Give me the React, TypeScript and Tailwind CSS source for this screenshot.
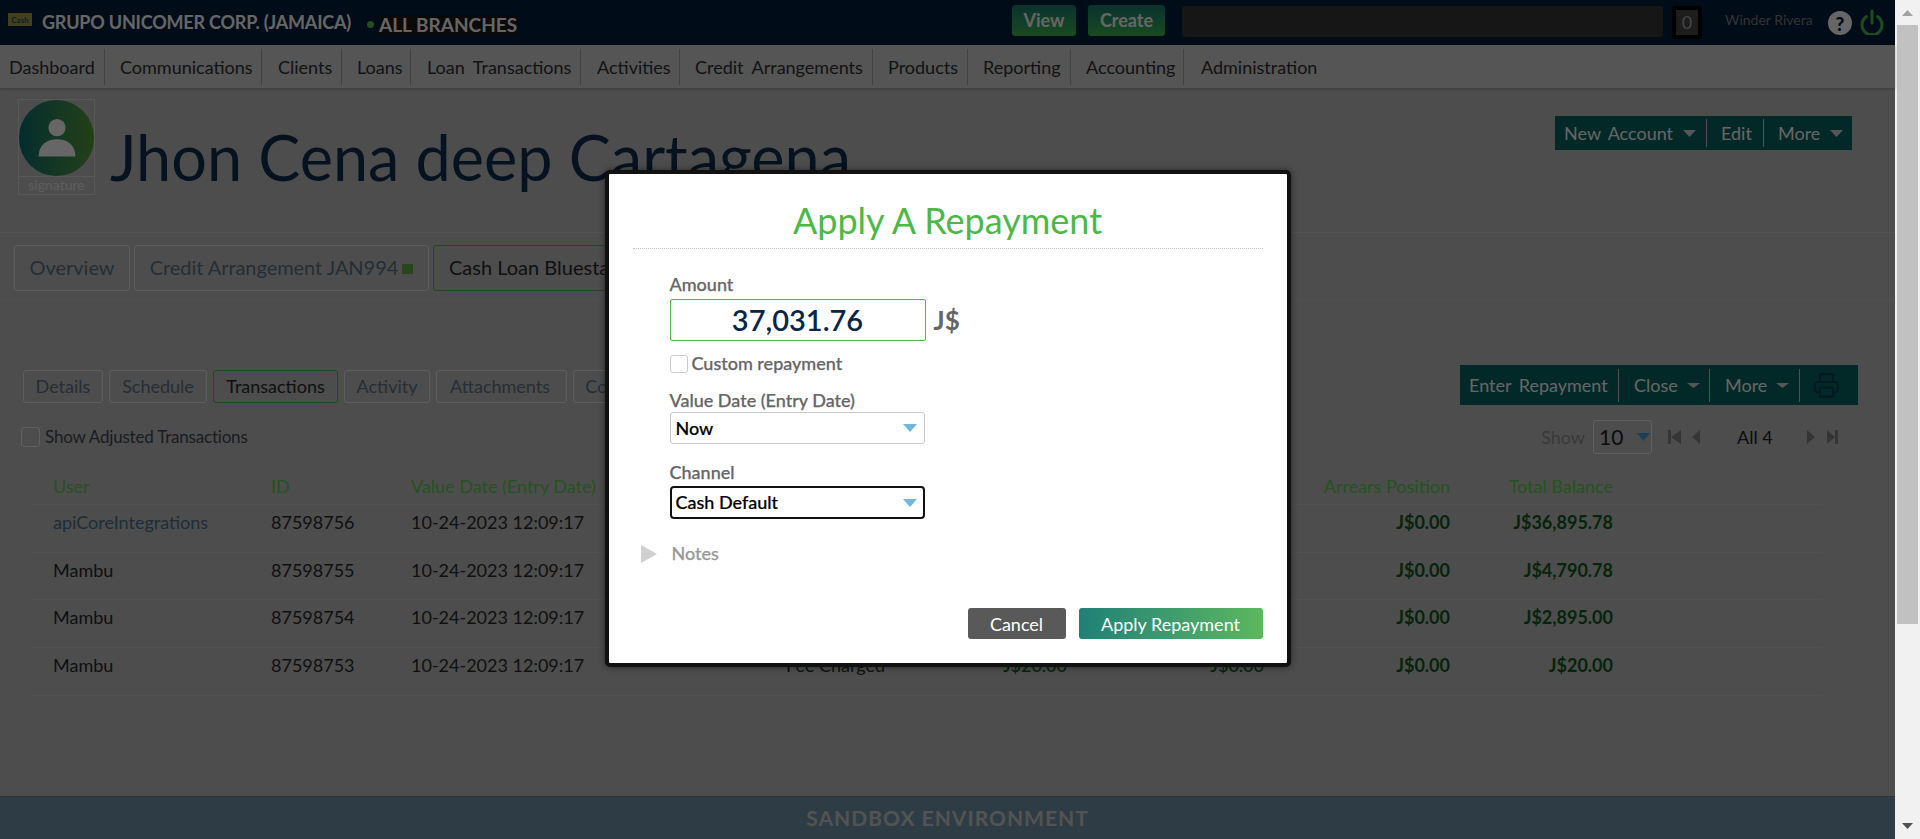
import React from "react";
import { Printer } from "lucide-react";

function Tri({ className, dir = "down" }: { className: string; dir?: "down" | "up" | "left" | "right" }) {
  const pts = { down: "0,0 10,0 5,10", up: "0,10 10,10 5,0", left: "10,0 10,10 0,5", right: "0,0 0,10 10,5" }[dir];
  return (
    <svg viewBox="0 0 10 10" preserveAspectRatio="none" className={`shrink-0 ${className}`} fill="currentColor">
      <polygon points={pts} />
    </svg>
  );
}

const navItems = [
  { t: "Dashboard", c: "w-[105px] pl-[9px]" },
  { t: "Communications", c: "w-[157px] pl-[15px]" },
  { t: "Clients", c: "w-[80px] pl-[16px]" },
  { t: "Loans", c: "w-[69px] pl-[15px]" },
  { t: "Loan Transactions", c: "w-[170px] pl-[16px]" },
  { t: "Activities", c: "w-[99px] pl-[16px]" },
  { t: "Credit Arrangements", c: "w-[193px] pl-[15px]" },
  { t: "Products", c: "w-[95px] pl-[15px]" },
  { t: "Reporting", c: "w-[103px] pl-[15px]" },
  { t: "Accounting", c: "w-[113px] pl-[15px]" },
  { t: "Administration", c: "w-[170px] pl-[17px] border-r-0" },
];

const rows = [
  { u: "apiCoreIntegrations", link: true, id: "87598756", ty: "Repayment", am: "J$4,105.00", pr: "J$0.00", bal: "J$36,895.78", h: "h-[48px]" },
  { u: "Mambu", id: "87598755", ty: "Disbursement", am: "J$1,895.78", pr: "J$0.00", bal: "J$4,790.78", h: "h-[47px]" },
  { u: "Mambu", id: "87598754", ty: "Fee Charged", am: "J$2,875.00", pr: "J$0.00", bal: "J$2,895.00", h: "h-[48px]" },
  { u: "Mambu", id: "87598753", ty: "Fee Charged", am: "J$20.00", pr: "J$0.00", bal: "J$20.00", h: "h-[48px]" },
];

const cols = "grid grid-cols-[218px_140px_375px_120px_161px_197px_186px_163px_1fr] pl-6 leading-6";

function Field({ label, children }: { label: string; children: React.ReactNode }) {
  return (
    <div>
      <div className="h-5 text-[18px] leading-5 font-medium text-[#666] [-webkit-text-stroke:0.25px]">{label}</div>
      {children}
    </div>
  );
}

export default function App() {
  return (
    <div className="flex h-[839px] w-full overflow-hidden font-['Lato','Liberation_Sans',sans-serif]">
      <div className="relative flex h-full min-w-0 flex-1 flex-col bg-[#c1c1c1]">
        {/* Header */}
        <header className="flex h-[45px] shrink-0 items-center bg-[#001e3c] text-white">
          <div className="mb-[6px] ml-2 flex h-[13px] w-6 items-center justify-center overflow-hidden bg-[#a8a24a] text-[8px] leading-none font-bold text-[#1c4a66]">Cash</div>
          <div className="ml-[10px] mb-[1px] text-[18px] leading-6 font-bold tracking-[-0.2px]">GRUPO UNICOMER CORP. (JAMAICA)</div>
          <div className="mt-1 ml-4 h-[7px] w-[7px] rounded-full bg-[#5cc04a]" />
          <div className="mt-[4px] ml-[5px] bg-[#191919] text-[19px] leading-5 font-bold">ALL BRANCHES</div>
          <button className="mb-1 ml-auto flex h-[31px] w-16 items-center justify-center rounded-[3px] bg-gradient-to-b from-[#197d70] to-[#3ebb4b] text-[18px] font-bold">View</button>
          <button className="mb-1 ml-3 flex h-[31px] w-[77px] items-center justify-center rounded-[3px] bg-gradient-to-b from-[#197d70] to-[#3ebb4b] text-[18px] font-bold">Create</button>
          <div className="mb-[2px] ml-[17px] h-[31px] w-[481px] rounded-[3px] bg-[#373737]" />
          <div className="ml-[9px] flex h-[33px] w-[30px] items-center justify-center rounded-[3px] border-[4px] border-black bg-[#4a4a4a] text-[18px] text-[#aaa]">0</div>
          <div className="mb-[5px] ml-[23px] w-[85px] text-[14px] leading-5 whitespace-nowrap text-[#808080]">Winder Rivera</div>
          <div className="ml-[18px] mt-[1px] flex h-6 w-6 items-center justify-center rounded-full bg-white text-[19px] leading-none font-black text-[#001e3c]">?</div>
          <svg viewBox="0 0 24 26" className="mb-[2px] ml-[8px] h-[26px] w-6 text-[#45bd55]" fill="none" stroke="currentColor" strokeWidth="3" strokeLinecap="round">
            <path d="M12 2v12" />
            <path d="M6.5 7.5a10 10 0 1 0 11 0" />
          </svg>
          <div className="w-[11px]" />
        </header>

        {/* Nav */}
        <nav className="flex h-[43px] shrink-0 items-center bg-[#d4d4d4] text-[18px] text-[#303030] shadow-[0_1px_3px_rgba(0,0,0,0.25)]">
          {navItems.map((n) => (
            <div key={n.t} className={`flex h-9 items-center whitespace-nowrap border-r border-[#a8a8a8] pt-[1px] [word-spacing:4px] ${n.c}`}>{n.t}</div>
          ))}
        </nav>

        {/* Profile */}
        <section className="flex h-[145px] shrink-0 border-b border-[#e0e0e0]/50 pr-[43px]">
          <div className="mt-[11px] ml-[18px] w-[77px]">
            <div className="h-[78px] border border-[#dcdcdc]">
              <div className="flex h-full w-full items-center justify-center rounded-full bg-gradient-to-r from-[#007070] to-[#58a232]">
                <svg viewBox="0 0 40 40" className="h-[46px] w-[46px]" fill="white">
                  <circle cx="20" cy="11" r="7.5" />
                  <path d="M4 36c0-10 7-15 16-15s16 5 16 15z" />
                </svg>
              </div>
            </div>
            <div className="h-[18px] border border-t-0 border-[#dcdcdc] text-center text-[14px] leading-[16px] text-[#e8e8e8]">signature</div>
          </div>
          <h1 className="mt-[29px] ml-[15px] whitespace-nowrap text-[63px] leading-[80px] font-normal text-[#0f2f50]">Jhon Cena deep Cartagena</h1>
          <div className="mt-[28px] ml-auto flex h-[34px] items-center bg-[#056464] text-[18px] text-white">
            <div className="flex h-[28px] w-[152px] items-center gap-[10px] border-r border-[#c8c8c8] pl-[9px] [word-spacing:3px]">
              New Account <Tri className="h-[7px] w-[13px] text-[#d8d8d8]" />
            </div>
            <div className="flex h-[28px] w-[57px] items-center border-r border-[#c8c8c8] pl-[14px]">Edit</div>
            <div className="flex h-[28px] w-[88px] items-center gap-[10px] pl-[14px]">
              More <Tri className="h-[7px] w-[13px] text-[#d8d8d8]" />
            </div>
          </div>
        </section>

        {/* Top tabs */}
        <div className="flex h-[67px] shrink-0 gap-1 border-b border-[#d0d0d0]/50 pt-[12px] pl-[14px] text-[20px]">
          <div className="flex h-[46px] w-[116px] items-center justify-center rounded-[3px] border border-[#e8e8e8] pb-[2px] text-[#5c7488]">Overview</div>
          <div className="flex h-[46px] w-[295px] items-center justify-center gap-1 rounded-[3px] border border-[#e8e8e8] pb-[2px] text-[#5c7488]">
            <span className="tracking-[-0.05px]">Credit Arrangement JAN994</span>
            <span className="mt-[4px] h-[10px] w-[11px] bg-[#62b04a]" />
          </div>
          <div className="flex h-[46px] w-[340px] items-center rounded-[3px] border border-[#4db848] pb-[2px] pl-[15px] whitespace-nowrap text-[#2a2a2a]">Cash Loan Bluestar</div>
        </div>

        {/* Sub tabs + toolbar */}
        <div className="flex h-[103px] shrink-0 items-end justify-between pr-[37px] pl-[23px]">
          <div className="flex gap-[6px] text-[18px]">
            <div className="flex h-[33px] w-[80px] items-center justify-center rounded-[3px] border border-[#e8e8e8] text-[#5c7488]">Details</div>
            <div className="flex h-[33px] w-[98px] items-center justify-center rounded-[3px] border border-[#e8e8e8] text-[#5c7488]">Schedule</div>
            <div className="flex h-[33px] w-[125px] items-center justify-center rounded-[3px] border border-[#4db848] text-[#2a2a2a]">Transactions</div>
            <div className="flex h-[33px] w-[86px] items-center justify-center rounded-[3px] border border-[#e8e8e8] text-[#5c7488]">Activity</div>
            <div className="flex h-[33px] w-[131px] items-center justify-center rounded-[3px] border border-[#e8e8e8] pr-[3px] text-[#5c7488]">Attachments</div>
            <div className="flex h-[33px] w-[110px] items-center justify-center rounded-[3px] border border-[#e8e8e8] text-[#5c7488]">Comments</div>
          </div>
          <div className="mb-[-2px] flex h-10 items-center bg-[#056464] text-[18px] text-white">
            <div className="flex h-[33px] w-[159px] items-center border-r border-[#c8c8c8] pl-[9px] [word-spacing:3px]">Enter Repayment</div>
            <div className="flex h-[33px] w-[91px] items-center gap-[9px] border-r border-[#c8c8c8] pl-[15px]">
              Close <Tri className="h-[5px] w-[13px] text-[#d8d8d8]" />
            </div>
            <div className="flex h-[33px] w-[90px] items-center gap-[9px] border-r border-[#c8c8c8] pl-[15px]">
              More <Tri className="h-[5px] w-[13px] text-[#d8d8d8]" />
            </div>
            <div className="flex w-[58px] justify-center pr-[6px]">
              <Printer className="h-[27px] w-[27px] text-[#0a3a5a]" strokeWidth={1.6} />
            </div>
          </div>
        </div>

        {/* Filters */}
        <div className="flex h-[50px] shrink-0 items-center justify-between pt-[18px] pr-[57px] pl-[21px]">
          <div className="flex items-center gap-[5px] text-[17px] text-[#404a54]">
            <span className="h-5 w-[19px] rounded-[3px] border border-[#f0f0f0]" />
            <span className="tracking-[-0.2px]">Show Adjusted Transactions</span>
          </div>
          <div className="flex items-center text-[#383838]">
            <span className="text-[18px] text-[#909090]">Show</span>
            <div className="ml-2 flex h-[34px] w-[59px] items-center justify-between rounded-[3px] border border-[#f0f0f0] pr-[1px] pl-[5px] text-[21px] text-[#202020]">
              10 <Tri className="h-2 w-[13px] text-[#4ca0cc]" />
            </div>
            <div className="ml-4 flex w-[13px] items-center text-[#858585]">
              <span className="h-[14px] w-[3px] bg-current" />
              <Tri dir="left" className="h-[14px] w-[10px]" />
            </div>
            <Tri dir="left" className="ml-[11px] h-[14px] w-2 text-[#858585]" />
            <span className="ml-[37px] w-[70px] text-[18px] text-[#202020]">All 4</span>
            <Tri dir="right" className="h-[14px] w-2 text-[#858585]" />
            <div className="ml-3 flex items-center text-[#858585]">
              <Tri dir="right" className="h-[14px] w-2" />
              <span className="h-[14px] w-[3px] bg-current" />
            </div>
          </div>
        </div>

        {/* Table */}
        <div className="mt-[21px] ml-[29px] w-[1793px] text-[18px]">
          <div className={`${cols} h-[31px] items-start border-b border-[#d0d0d0]/60 text-[#5ccc50]`}>
            <div>User</div>
            <div>ID</div>
            <div className="whitespace-nowrap">Value Date (Entry Date)</div>
            <div>Type</div>
            <div className="text-right">Amount</div>
            <div className="text-right">Fees</div>
            <div className="text-right">Arrears Position</div>
            <div className="text-right">Total Balance</div>
          </div>
          {rows.map((r) => (
            <div key={r.id} className={`${cols} ${r.h} border-b border-[#d0d0d0]/60 pt-[5px] text-[#2a2a2a]`}>
              <div className={r.link ? "text-[#4a7090]" : ""}>{r.u}</div>
              <div>{r.id}</div>
              <div>10-24-2023 12:09:17</div>
              <div className="whitespace-nowrap">{r.ty}</div>
              <div className="text-right font-medium text-[#0f5a1e]">{r.am}</div>
              <div className="text-right font-medium text-[#0f5a1e]">{r.pr}</div>
              <div className="text-right font-bold text-[#0f5a1e]">J$0.00</div>
              <div className="text-right font-bold text-[#0f5a1e]">{r.bal}</div>
            </div>
          ))}
        </div>

        {/* Footer */}
        <footer className="mt-auto flex h-[43px] shrink-0 items-center justify-center border-t border-[#808080] bg-[#7398ac] text-[21px] font-bold tracking-[1px] text-[#d0d0d0]">
          SANDBOX ENVIRONMENT
        </footer>

        {/* Backdrop and dialog */}
        <div className="absolute inset-0 flex items-start justify-center bg-black/60 pt-[170px]">
          <div className="flex h-[497px] w-[686px] flex-col rounded-[5px] border-[4px] border-[#111] bg-white pr-6 pl-6 shadow-[0_0_6px_rgba(0,0,0,0.5)]">
            <h2 className="h-[75px] border-b border-dotted border-[#c4c4c4] pt-[21px] text-center text-[36px] leading-[50px] font-normal text-[#4db848]">Apply A Repayment</h2>
            <div className="mt-[25px] ml-[37px]">
              <Field label="Amount">
                <div className="mt-[5px] flex items-center">
                  <div className="flex h-[42px] w-[256px] items-center justify-center rounded-[2px] border border-[#4db848] text-[29px] font-semibold text-[#0b2545]">37,031.76</div>
                  <span className="ml-2 text-[26px] font-bold text-[#666]">J$</span>
                </div>
              </Field>
              <div className="mt-[14px] flex h-[18px] items-center gap-1 text-[18px] font-medium text-[#666]">
                <span className="h-[18px] w-[18px] rounded-[3px] border border-[#ccc]" />
                <span className="pb-[2px] [-webkit-text-stroke:0.25px]">Custom repayment</span>
              </div>
              <div className="mt-[17px]">
                <Field label="Value Date (Entry Date)">
                  <div className="mt-[2px] flex h-[32px] w-[255px] items-center justify-between rounded-[3px] border border-[#c8c8c8] pr-[7px] pl-[5px] text-[18px] font-medium text-black [-webkit-text-stroke:0.2px]">
                    Now <Tri className="h-[8px] w-[14px] text-[#6db8dc]" />
                  </div>
                </Field>
              </div>
              <div className="mt-[18px]">
                <Field label="Channel">
                  <div className="mt-1 flex h-[33px] w-[255px] items-center justify-between rounded-[4px] border-2 border-[#111] pr-[6px] pl-[4px] text-[18px] font-medium text-black [-webkit-text-stroke:0.2px]">
                    Cash Default <Tri className="h-[8px] w-[14px] text-[#6db8dc]" />
                  </div>
                </Field>
              </div>
            </div>
            <div className="mt-[25px] ml-2 flex h-5 items-center gap-[15px] text-[18px] font-medium text-[#999]">
              <Tri dir="right" className="h-[18px] w-4 text-[#d0d0d0]" />
              <span className="pb-[2px] [-webkit-text-stroke:0.25px]">Notes</span>
            </div>
            <div className="mt-[44px] flex justify-end gap-[13px] text-[18px] text-white">
              <button className="h-[31px] w-[98px] rounded-[3px] bg-[#595959] pt-[1px]">Cancel</button>
              <button className="h-[31px] w-[184px] rounded-[3px] bg-gradient-to-r from-[#1f8076] to-[#5cb85c] pt-[1px]">Apply Repayment</button>
            </div>
          </div>
        </div>
      </div>

      {/* Scrollbar */}
      <aside className="flex h-full w-[25px] shrink-0 flex-col items-center bg-[#f1f1f1] pt-[10px] pb-[10px]">
        <Tri dir="up" className="h-[6px] w-[11px] text-[#a3a3a3]" />
        <div className="mt-[9px] h-[599px] w-[21px] bg-[#c1c1c1]" />
        <Tri className="mt-auto h-[6px] w-[11px] text-[#505050]" />
      </aside>
    </div>
  );
}
